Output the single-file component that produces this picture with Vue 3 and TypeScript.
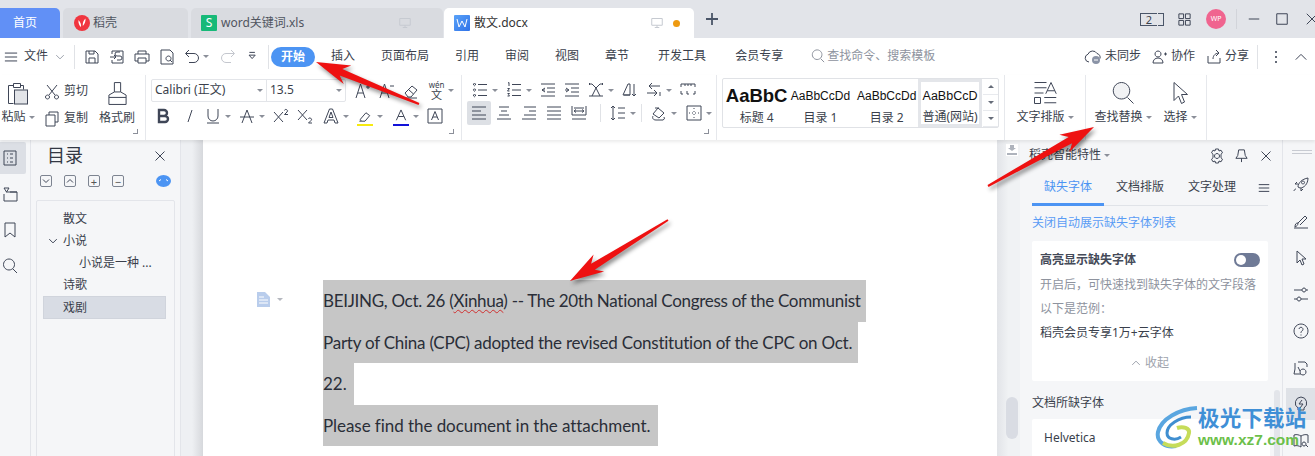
<script setup lang="ts">
import { h } from 'vue'

const icons: Record<string, string> = {
  menu: 'M1 3.5h14M1 8h14M1 12.5h14',
  save: 'M2 2h9l3 3v9H2zM5 14V9h6v5M5 2v3h5V2',
  saveas: 'M3 5V2h11v12H3v-3M1 8h6M5 6l2 2-2 2M8 11h3a2 2 0 0 0 0-4H8a2 2 0 0 1 0-4h3',
  print: 'M4 5V2h8v3M4 12H1V5h14v7h-3M4 9h8v5H4z',
  preview: 'M2 1h9l3 3v11H2zM9.5 7a2.5 2.5 0 1 0 .01 0M11 11l2 2',
  undo: 'M5 1L1.5 4.5 5 8M2 4.5h8a4.5 4.5 0 0 1 0 9H5',
  redo: 'M11 1l3.5 3.5L11 8M14 4.5H6a4.5 4.5 0 0 0 0 9h5',
  more: 'M2 2h8M1.5 6l4.5 5 4.5-5z',
  cut: 'M3 1l8 10M13 1L5 11M3.5 11a2 2 0 1 0 .01 0M12.5 11a2 2 0 1 0 .01 0',
  copy: 'M5 4V1h9v10h-3M2 4h9v11H2z',
  brush: 'M6 1h4v6H6zM6 7L2.5 9v6h11V9L10 7M2.5 10.500h11',
  grow: 'M1 15L5.5 1 10 15M2.8 10h5.4M11 4h4M13 2v4',
  shrink: 'M1 15L5.5 1 10 15M2.8 10h5.4M11 3h4',
  erase: 'M2 10l7-7 5 4-6 7H5zM5.5 6.5l5 4.5M2 15h12',
  bold: 'M4 2h5a3 3 0 0 1 0 6H4zM4 8h6a3 3 0 0 1 0 6H4z',
  italic: 'M11 2L7 14',
  under: 'M3 1v7a5 5 0 0 0 10 0V1M2 15h12',
  strike: 'M3 15L8 2l5 13M1 9h14',
  sup: 'M1 4l9 10M10 4L1 14M11.5 2.5a1.5 1.5 0 1 1 2.5 1.5l-2.5 2.5H15',
  sub: 'M1 2l9 10M10 2L1 12M11.5 11a1.5 1.5 0 1 1 2.5 1.5L11.5 15H15',
  outline: 'M1 15L6.5 1h3L15 15h-3l-1-3H5l-1 3zM6 9.5h4L8 4z',
  mark: 'M3 11l6-7 4 3-5 6H4zM2 13h2',
  colorA: 'M3 12L8 1l5 11M5 8h6',
  boxA: 'M1 1h14v14H1zM4.5 12L8 3.5l3.5 8.5M6 9h4',
  bullets: 'M6 2.5h9M6 8h9M6 13.5h9M2.5 1.500a1 1 0 1 0 .01 0M2.5 7a1 1 0 1 0 .01 0M2.5 12.500a1 1 0 1 0 .01 0',
  numbers: 'M6 2.5h9M6 8h9M6 13.5h9M2 1l1-.5V4M1.5 6.500h2l-2 2.500h2M1.5 11.500h2l-1 1.200 1 1.300h-2',
  outdent: 'M1 2h14M7 6h8M7 10h8M1 14h14M5 6L2 8l3 2M2 8h3',
  indent: 'M1 2h14M7 6h8M7 10h8M1 14h14M2 6l3 2-3 2M1 8h3',
  direction: 'M1 2h3l4 4 4-4h3M4 14L8 6l4 8M1 14h14M2 1l-1 1 1 1M14 1l1 1-1 1',
  sort: 'M1 13L6 2h2v11zM2 13h6M12 2v12M10 12l2 2 2-2',
  tabs: 'M6 1L3 4h11M3 4l3 3M1 11h10M8 8l3 3-3 3M14 10v4',
  ruler: 'M1 2h14M1 2v3M15 2v3M5 2v2M8 2v2M11 2v2M1 9v3h2M15 9v3h-2M7 9v3h2',
  left: 'M1 2h14M1 6h9M1 10h14M1 14h14',
  center: 'M3 2h10M5 6h6M3 10h10M1 14h14',
  right: 'M3 2h12M8 6h7M3 10h12M1 14h14',
  just: 'M1 2h14M1 6h14M1 10h14M1 14h14',
  dist: 'M1 1v9M15 1v9M3 3h10M1 14h14M4 6h8M5 4.500L3 6l2 1.500M11 4.500L13 6l-2 1.500M1 10h14',
  spacing: 'M3 1v14M1 3l2-2 2 2M1 13l2 2 2-2M8 3h7M8 8h7M8 13h7',
  shade: 'M2 9l5-6 6 5-5 5zM8 3l-4 0M2 11c-1 2 0 4 3 4h7a2 2 0 0 0 1-3',
  border: 'M1 1h14v14H1zM8 3v1M8 6v1M8 9v1M8 12v1M3 8h1M6 8h1M9 8h1M12 8h1',
  layout: 'M1 1h8M1 4.500h8M1 8h6M1 11h4v4H1zM7.5 11h8M7.5 14.500h8M8.500 8.500L12 1l3.500 7.500M9.500 6.500h5',
  search: 'M7 1a5.500 5.500 0 1 0 .01 0M11 11l4 4',
  select: 'M4 1v12l3-3 2 5 2-1-2-5h4z',
  person: 'M6 2a3 3 0 1 0 .01 0M1 14c0-3 2-5 5-5s5 2 5 5zM12 5h3M13.500 3.500v3',
  share: 'M2 7v7h12V9M7 10c0-4 3-6 6-6M10 1l3 3-3 3',
  close: 'M2 2l12 12M14 2L2 14',
  minus: 'M2 8h12',
  max: 'M2 2h12v12H2z',
  chevU: 'M2 11l6-6 6 6',
  chevD: 'M2 5l6 6 6-6',
  grid: 'M2 2h5v5H2zM9 2h5v5H9zM2 9h5v5H2zM9 9h5v5H9z',
  monitor: 'M1 2h14v9H1zM8 11v3M5 14h6',
  toc: 'M2 1h12v14H2zM5 4h1M8 4h3M5 8h1M8 8h3M5 12h1M8 12h3',
  nav: 'M2 1h5L4.500 5zM4 5h11v9H2V7M8 5h7',
  mark2: 'M3 1h10v14l-5-4-5 4z',
  gear: 'M8 5.500a2.500 2.500 0 1 0 .01 0M6.500 1h3l.5 2 2-.8 1.500 2.600L12 6.200v3.600l1.500 1.400-1.500 2.600-2-.8-.5 2h-3l-.5-2-2 .8-1.500-2.600L4 9.800V6.200L2.500 4.800 4 2.200l2 .8z',
  pin: 'M5 2h6l1 6 2 3H2l2-3zM8 11v4',
  rocket: 'M5 10c0-4 4-8 10-9 0 6-4 10-8 10zM10 4a1.500 1.500 0 1 0 .01 0M5 7H2l2-2M8 11v3l2-2M1 14c0-1 1-2 2-2',
  pen: 'M1 14h14M2 13c0-3 1-4 3-4 0 2-1 3-3 4zM5 9l7-7 2 2-7 7',
  sliders: 'M1 3h8M13 3h2M11 1a2 2 0 1 0 .01 0M1 12h3M8 12h7M6 10a2 2 0 1 0 .01 0',
  help: 'M8 1a7 7 0 1 0 .01 0M6 6a2 2 0 1 1 3 2c-1 .5-1 1-1 2M8 11.500v1',
  fontcloud: 'M5 2h7l2 2v3M2 3v6l-1 5h7M5 7l2 4M10 9a3 3 0 1 0 .01 0',
  bolt: 'M8 1a6 6 0 0 0-3 11v2h6v-2A6 6 0 0 0 8 1zM9 4L6 8h4l-3 4',
  book: 'M1 2c3-1 5 0 7 1 2-1 4-2 7-1v8M1 2v11c3-1 5 0 7 1V3M11 9a2 2 0 1 0 .01 0M13 12l2 2'
}

const Ic = (p: { n: string; s?: number; w?: number; f?: string }) =>
  h('svg', { class: 'ic', width: p.s ?? 16, height: p.s ?? 16, viewBox: '0 0 16 16', fill: p.f ?? 'none', stroke: 'currentColor' }, [
    h('path', { d: icons[p.n], 'vector-effect': 'non-scaling-stroke', 'stroke-width': p.w ?? 1 })
  ])

const menus = ['插入', '页面布局', '引用', '审阅', '视图', '章节', '开发工具', '会员专享']

const fontRow = [
  { n: 'bold', c: false, cls: 'w-b', w: 2.4 }, { n: 'italic', c: false, cls: '', w: 1 }, { n: 'under', c: true, cls: '', w: 1 },
  { n: 'strike', c: true, cls: '', w: 1 }, { n: 'sup', c: false, cls: '', w: 1 }, { n: 'sub', c: false, cls: 'w-s', w: 1 },
  { n: 'outline', c: true, cls: '', w: 1 }, { n: 'mark', c: true, cls: 'yellow', w: 1 }, { n: 'colorA', c: true, cls: 'blue', w: 1 }, { n: 'boxA', c: false, cls: '', w: 1 }
]
const paraTop = [
  { n: 'bullets', c: true }, { n: 'numbers', c: true }, { n: 'outdent', c: false }, { n: 'indent', c: false },
  { n: 'direction', c: true }, { n: 'sort', c: false }, { n: 'tabs', c: true }, { n: 'ruler', c: false }
]
const styleCards = [
  { t: 'AaBbC', l: '标题 4', cls: 'big' },
  { t: 'AaBbCcDd', l: '目录 1', cls: '' },
  { t: 'AaBbCcDd', l: '目录 2', cls: 'third' },
  { t: 'AaBbCcD', l: '普通(网站)', cls: 'sel' }
]
const rail = ['rocket', 'pen', 'select', 'sliders', 'help', 'fontcloud']

type P = [number, number]
const arrows: { tip: P; tail: P }[] = [
  { tip: [316, 62], tail: [419, 104] },
  { tip: [570, 281], tail: [668, 220] },
  { tip: [1094, 127], tail: [988, 186] }
]
function arrowPts(a: { tip: P; tail: P }): string {
  const [tx, ty] = a.tip
  const [ux, uy] = a.tail
  const L = Math.hypot(ux - tx, uy - ty)
  const dx = (ux - tx) / L
  const dy = (uy - ty) / L
  const nx = -dy
  const ny = dx
  const pt = (along: number, side: number) => `${(tx + dx * along + nx * side).toFixed(1)},${(ty + dy * along + ny * side).toFixed(1)}`
  return [pt(0, 0), pt(34, 10), pt(27, 3.5), pt(L, 1), pt(L, -1), pt(27, -3.5), pt(34, -10)].join(' ')
}
</script>

<template>
  <div class="app">
    <header class="tabbar">
      <div class="tab home">首页</div>
      <div class="tab t1">
        <svg class="logo" width="16" height="16" viewBox="0 0 16 16"><circle cx="8" cy="8" r="8" fill="#f0353f" /><path d="M4.500 5c-.5 3 1 6 2.500 7 .5-2-.5-5-2.500-7zM11.500 3.500C9.500 5 8.500 8 8.800 11c1.700-1.500 3-4.500 2.700-7.500z" fill="#fff" /></svg>
        <span>稻壳</span>
      </div>
      <div class="tab t2">
        <span class="sq green">S</span>
        <span>word关键词.xls</span>
        <Ic n="monitor" :s="12" class="tabmon" />
      </div>
      <div class="tab active">
        <span class="sq wblue"><svg width="12" height="12" viewBox="0 0 12 12" fill="none" stroke="#fff" stroke-width="1"><path d="M1 2l2 8 3-6 3 6 2-8" /></svg></span>
        <span>散文.docx</span>
        <Ic n="monitor" :s="12" class="tabmon" />
        <i class="dot"></i>
      </div>
      <svg class="plus" width="12" height="12" viewBox="0 0 12 12" stroke="#4a5568" stroke-width="1.800"><path d="M6 0v12M0 6h12" /></svg>
      <div class="winctl">
        <span class="two"><b>2</b><i></i></span>
        <Ic n="grid" :s="15" />
        <span class="avatar">WP</span>
        <i class="vline"></i>
        <Ic n="minus" :s="14" class="c1" />
        <Ic n="max" :s="14" class="c2" />
        <Ic n="close" :s="14" class="c3" />
      </div>
    </header>

    <nav class="menubar">
      <Ic n="menu" :s="14" class="m-h" />
      <span class="m-file">文件</span>
      <Ic n="chevD" :s="10" class="m-ch" />
      <i class="mdiv"></i>
      <div class="quick">
        <Ic n="save" /><Ic n="saveas" /><Ic n="print" /><Ic n="preview" />
        <span class="undo"><Ic n="undo" /><i class="caret"></i></span>
        <Ic n="redo" class="muted" />
        <Ic n="more" :s="11" class="qmore" />
      </div>
      <i class="mdiv"></i>
      <span class="pill">开始</span>
      <div class="menus"><span v-for="m in menus" :key="m">{{ m }}</span></div>
      <div class="find"><Ic n="search" :s="14" class="fic" /><span>查找命令、搜索模板</span></div>
      <div class="mright">
        <span class="act"><svg width="18" height="16" viewBox="0 0 18 16" fill="none" stroke="#3f4657"><path d="M5 13a4 4 0 0 1-1-7.800A5 5 0 0 1 13 4.500a4 4 0 0 1 3 5" /><circle cx="12" cy="11" r="4" fill="#8a93a6" stroke="none" /><path d="M10 11h4" stroke="#fff" /></svg>未同步</span>
        <span class="act"><Ic n="person" />协作</span>
        <span class="act"><Ic n="share" />分享</span>
        <i class="mdiv d2"></i>
        <span class="dots"><i></i><i></i><i></i></span>
        <Ic n="chevU" :s="14" />
      </div>
    </nav>

    <section class="ribbon">
      <div class="grp clip">
        <div class="big-btn paste">
          <svg width="24" height="24" viewBox="0 0 24 24" fill="none" stroke="#3f4657"><path d="M7.500 4.500h-5v18h5M7.500 2.500h7v4h-7zM14.500 4.500h3v4" /><rect x="8.500" y="9" width="13" height="14" fill="#e2e4e8" /></svg>
          <span class="lbl">粘贴<i class="caret"></i></span>
        </div>
        <div class="cutcopy">
          <span class="row-s"><Ic n="cut" />剪切</span>
          <span class="row-s"><Ic n="copy" />复制</span>
        </div>
        <div class="big-btn brush"><Ic n="brush" :s="25" /><span class="lbl">格式刷</span></div>
        <i class="launch"></i>
      </div>

      <div class="grp font">
        <div class="frow">
          <div class="fbox">
            <span class="fname">Calibri (正文)<i class="caret"></i></span>
            <span class="fsize">13.5<i class="caret"></i></span>
          </div>
          <Ic n="grow" class="g1" /><Ic n="shrink" class="g2" /><Ic n="erase" class="g3" />
          <span class="wen"><small>wén</small><b>文</b></span><i class="caret"></i>
        </div>
        <div class="frow two-r">
          <span v-for="f in fontRow" :key="f.n" class="cell" :class="f.cls">
            <Ic :n="f.n" :w="f.w" /><i v-if="f.c" class="caret"></i>
          </span>
        </div>
        <i class="launch"></i>
      </div>

      <div class="grp para">
        <div class="prow">
          <span v-for="p in paraTop" :key="p.n" class="cell"><Ic :n="p.n" /><i v-if="p.c" class="caret"></i></span>
        </div>
        <div class="prow r2">
          <span class="align on"><Ic n="left" /></span>
          <span class="align"><Ic n="center" /></span>
          <span class="align"><Ic n="right" /></span>
          <span class="align"><Ic n="just" /></span>
          <span class="align"><Ic n="dist" /></span>
          <i class="pdiv"></i>
          <span class="cell"><Ic n="spacing" /><i class="caret"></i></span>
          <i class="pdiv p2"></i>
          <span class="cell"><Ic n="shade" /><i class="caret"></i></span>
          <span class="cell cb"><Ic n="border" /><i class="caret"></i></span>
        </div>
        <i class="launch"></i>
      </div>

      <div class="grp styles">
        <div class="sbox">
          <div v-for="s in styleCards" :key="s.l" class="scard" :class="s.cls">
            <span class="st">{{ s.t }}</span><span class="sl">{{ s.l }}</span>
          </div>
          <div class="sscroll">
            <span><i class="up"></i></span><span><i class="dn"></i></span><span><i class="dn"></i></span>
          </div>
        </div>
      </div>

      <div class="grp txtl">
        <div class="big-btn"><Ic n="layout" :s="24" /><span class="lbl">文字排版<i class="caret"></i></span></div>
      </div>
      <div class="grp findg">
        <div class="big-btn"><Ic n="search" :s="24" f="#f1f2f4" /><span class="lbl">查找替换<i class="caret"></i></span></div>
        <div class="big-btn"><Ic n="select" :s="24" /><span class="lbl">选择<i class="caret"></i></span></div>
      </div>
    </section>

    <main class="body">
      <aside class="lrail">
        <span class="lr on"><Ic n="toc" /></span>
        <span class="lr"><Ic n="nav" /></span>
        <span class="lr"><Ic n="mark2" /></span>
        <span class="lr"><Ic n="search" /></span>
      </aside>

      <aside class="toc">
        <div class="toc-h"><span>目录</span><Ic n="close" :s="12" /></div>
        <div class="toc-tools">
          <span class="tb"><Ic n="chevD" :s="8" /></span>
          <span class="tb"><Ic n="chevU" :s="8" /></span>
          <span class="tb t">+</span>
          <span class="tb t">−</span>
          <svg class="oval" width="15" height="12" viewBox="0 0 15 12"><ellipse cx="7.500" cy="6" rx="7.500" ry="6" fill="#4c94f3" /><path d="M3 6l2-1.500M12 6l-2-1.500" stroke="#fff" stroke-width="1" /></svg>
        </div>
        <ul class="toc-list">
          <li class="l1">散文</li>
          <li class="l1"><Ic n="chevD" :s="10" class="tw" />小说</li>
          <li class="l2">小说是一种 ...</li>
          <li class="l1">诗歌</li>
          <li class="l1 cur">戏剧</li>
        </ul>
      </aside>

      <div class="gutter left"></div>

      <article class="page">
        <div class="para-ic"><svg width="13" height="15" viewBox="0 0 13 15"><path d="M0 0h8l5 5v10H0z" fill="#b9cdec" /><path d="M2 5h5M2 8h9M2 11h9" stroke="#fff" /></svg><i class="caret lt"></i></div>
        <div class="doc">
          <span class="ln w1">BEIJING, Oct. 26 (<u>Xinhua</u>) -- The 20th National Congress of the Communist</span>
          <span class="ln w2">Party of China (CPC) adopted the revised Constitution of the CPC on Oct.</span>
          <span class="ln w3">22.</span>
          <span class="ln w4">Please find the document in the attachment.</span>
        </div>
      </article>

      <div class="gutter right">
        <span class="rul"><svg width="10" height="10" viewBox="0 0 10 10" fill="#aeb3bc"><path d="M3 0h4v3h2L5 6 1 3h2zM0 8h10v2H0z" /></svg></span>
        <span class="thumb"></span>
      </div>

      <aside class="side">
        <div class="side-h">
          <span>稻壳智能特性</span><i class="caret"></i>
          <span class="sp"></span>
          <Ic n="gear" :s="16" /><Ic n="pin" :s="15" /><Ic n="close" :s="12" />
        </div>
        <div class="side-tabs">
          <span class="on">缺失字体</span><span>文档排版</span><span>文字处理</span><Ic n="menu" :s="12" />
        </div>
        <a class="link">关闭自动展示缺失字体列表</a>
        <div class="card">
          <div class="ctitle"><b>高亮显示缺失字体</b><i class="toggle"></i></div>
          <p class="g">开启后，可快速找到缺失字体的文字段落</p>
          <p class="g">以下是范例：</p>
          <p>稻壳会员专享1万+云字体</p>
          <p class="fold"><Ic n="chevU" :s="10" />收起</p>
        </div>
        <h4>文档所缺字体</h4>
        <div class="card2">Helvetica</div>
        <span class="sthumb"></span>
      </aside>

      <aside class="rrail">
        <span class="grip"></span>
        <span v-for="r in rail" :key="r" class="rr"><Ic :n="r" /></span>
        <span class="rr on"><Ic n="bolt" /></span>
        <span class="rr"><Ic n="book" /></span>
      </aside>
    </main>

    <svg class="arrows" width="1315" height="456" viewBox="0 0 1315 456">
      <polygon v-for="(a, i) in arrows" :key="i" :points="arrowPts(a)" fill="#ee1111" />
    </svg>

    <div class="wm">
      <svg width="46" height="46" viewBox="0 0 46 46" fill="none">
        <path d="M42 3C24 4 6 14 3 27c-2 10 8 16 18 14" stroke="#5aa6e0" stroke-width="4" />
        <path d="M36 12C24 12 12 20 12 28c0 6 8 8 14 4" stroke="#3f8ed0" stroke-width="3" />
        <path d="M8 38c10 6 24 2 26-10 1-5-6-7-12-5" stroke="#c6dc5a" stroke-width="4" />
      </svg>
      <div class="wm-t"><b>极光下载站</b><em>www.xz7.com</em></div>
    </div>
  </div>
</template>

<style>
html, body { margin: 0; padding: 0; overflow: hidden; }
</style>

<style scoped>
* { box-sizing: border-box; }
.app { position: relative; width: 1315px; height: 456px; overflow: hidden; background: #fff; color: #3a3f4c; font: 12px/1.2 "Noto Sans", "Noto Sans CJK SC", sans-serif; display: flex; flex-direction: column; }
.ic { flex: none; display: block; color: #3f4657; }
i { display: block; font-style: normal; }
.caret { width: 0; height: 0; border: 3px solid transparent; border-top: 3.5px solid #8b8f99; border-bottom: 0; flex: none; }

.tabbar { height: 38px; background: #e2e4e9; display: flex; align-items: flex-end; flex: none; position: relative; }
.tab { height: 30px; border-radius: 5px 5px 0 0; background: #d9dbe0; display: flex; align-items: center; margin-right: 3px; color: #50555f; font-size: 12px; }
.home { width: 60px; background: #6190f6; color: #fff; padding-left: 13px; border-top-left-radius: 0; }
.t1 { width: 125px; padding-left: 11px; gap: 3px; }
.t2 { width: 252px; padding-left: 10px; gap: 4px; margin-right: 1px; }
.active { width: 250px; background: #fff; padding-left: 10px; gap: 4px; color: #333; }
.sq { width: 16px; height: 16px; border-radius: 1px; display: flex; align-items: center; justify-content: center; color: #fff; font-size: 12px; line-height: 1; }
.green { background: #17b978; }
.wblue { background: linear-gradient(135deg, #5aa2f8, #2f72e8); }
.tabmon { margin-left: auto; color: #c6cad1; }
.t2 .tabmon { margin-right: 32px; }
.dot { width: 7px; height: 7px; border-radius: 50%; background: #ee9a10; margin: 0 14px 0 6px; }
.plus { margin: 0 0 13px 9px; }
.winctl { position: absolute; right: 0; top: 7px; height: 24px; display: flex; align-items: center; }
.two { width: 24px; height: 13px; border: 1px solid #4a5568; display: flex; align-items: center; font-size: 11px; line-height: 1; position: relative; justify-content: center; padding-right: 6px; margin-right: 13px; }
.two b { font-weight: 400; }
.two i { position: absolute; right: 5px; top: -1px; bottom: -1px; width: 1px; background: #e2e4e9; }
.avatar { width: 20px; height: 20px; margin-left: 14px; border-radius: 50%; background: #f0648f; color: #fff; font-size: 7px; display: flex; align-items: center; justify-content: center; }
.vline { width: 1px; height: 20px; background: #d2d4da; margin-left: 10px; }
.c1 { margin-left: 10px; }
.c2 { margin-left: 14px; }
.c3 { margin-left: 16px; margin-right: -4px; }

.menubar { height: 37px; flex: none; display: flex; align-items: center; font-size: 12px; color: #3a3f4c; background: #fff; padding-left: 4px; }
.m-file { margin-left: 6px; }
.m-ch { margin-left: 7px; color: #9ea3ad; }
.mdiv { width: 1px; height: 24px; background: #e0e2e6; margin-left: 9px; }
.quick { display: flex; align-items: center; margin-left: 9px; gap: 9px; }
.undo { display: flex; align-items: center; gap: 3px; margin-right: 2px; }
.muted { color: #c4c7ce; }
.qmore { margin-left: 3px; }
.pill { width: 44px; height: 20px; margin-left: 2px; border-radius: 10px; background: #4c94f3; color: #fff; font-weight: 700; text-align: center; line-height: 20px; }
.menus { display: flex; margin-left: 16px; gap: 26px; white-space: nowrap; }
.menus span:nth-child(7), .menus span:nth-child(8) { margin-left: 3px; }
.find { display: flex; align-items: center; margin-left: 28px; gap: 2px; color: #8e939e; white-space: nowrap; }
.fic { color: #8e939e; }
.mright { margin-left: auto; display: flex; align-items: center; padding-right: 7px; white-space: nowrap; }
.act { display: flex; align-items: center; gap: 3px; margin-right: 11px; }
.d2 { margin-left: -3px; }
.dots { display: flex; flex-direction: column; gap: 3px; margin: 0 17px; }
.dots i { width: 2px; height: 2px; background: #666c79; }

.ribbon { height: 65px; flex: none; display: flex; background: #fff; box-shadow: 0 2px 3px rgba(0, 0, 0, .08); position: relative; z-index: 1; }
.grp { position: relative; border-right: 1px solid #e6e8ec; height: 65px; flex: none; }
.launch { position: absolute; right: 7px; bottom: 6px; width: 5px; height: 5px; border-right: 1px solid #8b8f99; border-bottom: 1px solid #8b8f99; }
.big-btn { display: flex; flex-direction: column; align-items: center; }
.big-btn .lbl { display: flex; align-items: center; gap: 3px; height: 18px; margin-top: 3px; white-space: nowrap; }
.clip { width: 146px; display: flex; padding-top: 6px; }
.paste { width: 36px; }
.cutcopy { width: 60px; padding-left: 8px; display: flex; flex-direction: column; padding-top: 2px; gap: 10px; }
.row-s { display: flex; align-items: center; gap: 4px; height: 17px; white-space: nowrap; }
.brush { width: 38px; margin-left: 2px; }

.font { width: 316px; padding: 4px 0 0 5px; }
.frow { display: flex; align-items: center; }
.fbox { width: 195px; height: 23px; border: 1px solid #e3e5e9; border-radius: 2px; display: flex; color: #3a3f4c; margin-right: 9px; }
.fname, .fsize { display: flex; align-items: center; justify-content: space-between; padding: 0 3px; white-space: nowrap; }
.fname { width: 115px; border-right: 1px solid #e3e5e9; }
.fsize { flex: 1; }
.g2 { margin-left: 8px; }
.g3 { margin-left: 8px; }
.wen { margin: 0 3px 0 9px; width: 17px; height: 22px; display: flex; flex-direction: column; align-items: center; line-height: 1; }
.wen small { font-size: 8px; line-height: 9px; }
.wen b { font-weight: 400; font-size: 11px; line-height: 12px; }
.two-r { margin: 6px 0 0 4px; gap: 8px; }
.cell { display: flex; align-items: center; gap: 4px; }
.w-b { margin-right: 2px; }
.w-s { margin-right: 2px; }
.yellow .ic { box-shadow: 0 2px 0 0 #f7ea10; height: 15px; }
.blue .ic { box-shadow: 0 2px 0 0 #1212d8; height: 15px; }
.yellow { margin-right: 2px; }

.para { width: 255px; padding: 7px 0 0 10px; }
.prow { display: flex; gap: 8px; align-items: center; }
.r2 { margin: 3px 0 0 -5px; gap: 1px; }
.align { width: 24px; height: 24px; display: flex; align-items: center; justify-content: center; border-radius: 2px; }
.align.on { background: #dde0e5; }
.pdiv { width: 1px; height: 18px; background: #e0e2e6; margin: 0 8px; }
.p2 { margin: 0 8px 0 4px; }
.cb { margin-left: 8px; }

.styles { width: 288px; padding: 3px 0 0 5px; }
.sbox { width: 277px; height: 50px; border: 1px solid #e0e2e6; border-radius: 2px; display: flex; padding-left: 2px; }
.scard { width: 65px; display: flex; flex-direction: column; align-items: center; justify-content: space-between; padding: 9px 0 2px; color: #3a3f4c; }
.st { font: 12px/16px "Liberation Sans", sans-serif; color: #111; white-space: nowrap; }
.big .st { font-size: 18.5px; font-weight: 700; line-height: 20px; margin-top: -2px; }
.big { width: 64px; }
.third { margin-left: 3px; width: 63px; }
.sel { border: 3px solid #e4e6ea; width: 65px; padding: 6px 0 0; height: 48px; }
.sel .st { font-size: 12.5px; }
.sl { white-space: nowrap; height: 15px; line-height: 15px; }
.sscroll { width: 15px; display: flex; flex-direction: column; margin-left: 1px; }
.sscroll span { flex: 1; display: flex; align-items: center; justify-content: center; border-bottom: 1px solid #e8eaee; }
.up { width: 0; height: 0; border: 3px solid transparent; border-bottom: 3.5px solid #666c79; border-top: 0; }
.dn { width: 0; height: 0; border: 3px solid transparent; border-top: 3.5px solid #666c79; border-bottom: 0; }

.txtl { width: 81px; padding-top: 6px; }
.findg { width: 121px; padding-top: 6px; display: flex; }
.findg .big-btn:first-child { width: 70px; margin-left: 2px; }
.findg .big-btn:last-child { margin-left: 2px; width: 40px; }

.body { flex: 1; display: flex; min-height: 0; background: #f5f6f8; position: relative; }
.lrail { width: 31px; flex: none; display: flex; flex-direction: column; padding-top: 2px; border-right: 1px solid #e3e5ea; }
.lr { height: 35.5px; display: flex; align-items: center; width: 26px; padding-left: 2px; }
.lr.on { background: #dcdfe5; height: 32px; border-radius: 0 2px 2px 0; margin-bottom: 3px; }
.toc { width: 150px; flex: none; border-right: 1px solid #e3e5ea; padding: 0 5px; }
.toc-h { height: 32px; display: flex; align-items: center; justify-content: space-between; padding: 0 9px 0 11px; font-size: 18px; color: #333844; }
.toc-tools { display: flex; align-items: center; gap: 12px; height: 18px; margin: 0 0 10px 4px; }
.tb { width: 12px; height: 12px; border: 1px solid #7d8491; border-radius: 2px; display: flex; align-items: center; justify-content: center; line-height: 1; font-size: 11px; color: #555; }
.oval { margin-left: 20px; }
.toc-list { list-style: none; margin: 0; padding: 7px 6px 0; height: 260px; border: 1px solid #e3e5ea; border-radius: 2px; }
.toc-list li { height: 22px; line-height: 22px; padding-left: 20px; position: relative; display: flex; align-items: center; }
.toc-list .l2 { padding-left: 36px; }
.tw { position: absolute; left: 5px; top: 6px; }
.toc-list .cur { background: #d8dce4; border: 1px solid #d0d4dc; width: 123px; padding-left: 19px; height: 23px; }

.gutter { width: 22px; flex: none; background: #eef0f3; position: relative; }
.gutter.left { background: linear-gradient(90deg, #eef0f3 50%, #d6d8dc); }
.gutter.right { width: 23px; background: linear-gradient(270deg, #f0f2f4 50%, #e2e4e8); }
.rul { position: absolute; left: 9px; top: 4px; width: 12px; height: 12px; background: #fff; display: flex; align-items: center; justify-content: center; }
.thumb { position: absolute; left: 9px; top: 257px; width: 12px; height: 42px; border-radius: 6px; background: #d9dce3; }
.page { width: 794px; flex: none; background: #fff; position: relative; padding: 140px 0 0 120px; }
.para-ic { position: absolute; left: 54px; top: 152px; display: flex; align-items: center; gap: 7px; }
.lt { border-top-color: #b5b8bf; }
.doc { font: 17px/41.5px "Lato", sans-serif; color: #2a2e38; display: flex; flex-direction: column; }
.ln { background: #c6c6c6; white-space: nowrap; height: 41.5px; display: block; }
.ln u { text-decoration: underline wavy #d03030 1px; text-underline-offset: 2px; }
.w1 { width: 543px; letter-spacing: -.3px; }
.w2 { width: 535px; letter-spacing: -.24px; }
.w3 { width: 31px; }
.w4 { width: 335px; letter-spacing: -.06px; }

.side { width: 262px; flex: none; padding: 0 14px 0 12px; position: relative; }
.side-h { height: 32px; display: flex; align-items: center; gap: 3px; margin-left: -3px; padding-bottom: 1px; }
.side-h .sp { flex: 1; }
.side-h .ic + .ic { margin-left: 6px; }
.side-h .ic:last-child { margin: 0 -4px 0 8px; }
.side-tabs { height: 34px; padding: 0 0 2px 12px; display: flex; align-items: center; gap: 24px; border-bottom: 1px solid #e0e3e8; position: relative; white-space: nowrap; }
.side-tabs span { flex: none; }
.side-tabs .on { color: #4c94f3; }
.side-tabs .on::after { content: ""; position: absolute; left: 0; bottom: -1px; width: 72px; height: 3px; background: #4c94f3; }
.side-tabs .ic { margin-left: -2px; }
.link { display: block; color: #5a9cf5; margin-top: 10px; height: 25px; }
.card { background: #fff; height: 140px; padding: 10px 8px; border-radius: 2px; }
.ctitle { display: flex; justify-content: space-between; align-items: center; height: 18px; }
.ctitle b { font-weight: 700; color: #444a58; }
.toggle { width: 26px; height: 14px; border-radius: 7px; background: #6f7a96; position: relative; }
.toggle::before { content: ""; position: absolute; left: 2px; top: 2px; width: 10px; height: 10px; border-radius: 50%; background: #fff; }
.card p { margin: 7px 0 0; height: 18px; line-height: 18px; white-space: nowrap; }
.card p + p { margin-top: 6px; }
.card .g { color: #8e939e; }
.card .fold { display: flex; align-items: center; justify-content: center; gap: 4px; color: #9ea3ad; margin-top: 12px; }
.fold .ic { color: #9ea3ad; }
h4 { font-weight: 400; font-size: 12px; margin: 14px 0 0; height: 24px; line-height: 15px; }
.card2 { background: #fff; height: 60px; width: 238px; padding: 12px; border-radius: 2px; }
.sthumb { position: absolute; right: 2px; top: 250px; width: 6px; height: 70px; background: #e3e5ea; border-radius: 3px; }
.rrail { flex: 1; border-left: 1px solid #e3e5ea; display: flex; flex-direction: column; align-items: flex-end; }
.grip { width: 20px; height: 4px; border-top: 1px solid #c8cbd2; border-bottom: 1px solid #c8cbd2; margin: 10px 3px 13px 0; flex: none; }
.rr { width: 29px; height: 36.5px; display: flex; align-items: center; justify-content: center; flex: none; }
.rr.on { background: #dfe2e7; height: 32px; margin: 2px 0 3px; }

.arrows { position: absolute; left: 0; top: 0; pointer-events: none; filter: drop-shadow(2px 3px 2px rgba(0, 0, 0, .45)); z-index: 5; }
.wm { position: absolute; left: 1155px; top: 405px; display: flex; z-index: 6; }
.wm-t { display: flex; flex-direction: column; margin-left: -3px; }
.wm-t b { font-size: 21.5px; line-height: 26px; color: #3f8fd6; letter-spacing: .2px; white-space: nowrap; }
.wm-t em { font: 700 15.5px/18px "Liberation Sans", sans-serif; color: #6cc04a; font-style: normal; white-space: nowrap; }
</style>
